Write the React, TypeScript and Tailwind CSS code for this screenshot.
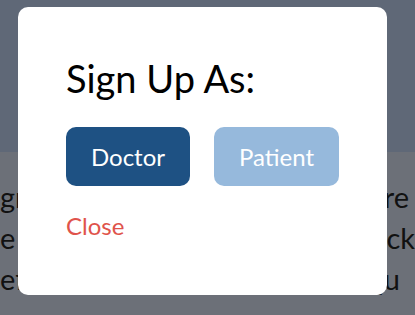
import React from "react";

const SignUpModal = () => {
    return (
        <div className="absolute left-[18px] top-[7px] w-[369px] h-[288px] bg-white rounded-[10px] px-[48px] pt-[48px]">
            <h2 className="text-[38px] leading-[46px] text-black">Sign Up As:</h2>
            <div className="flex flex-row gap-[24px] mt-[26px]">
                <button className="w-[124px] h-[59px] rounded-[10px] bg-[#1e5183] text-white text-[24px]">
                    Doctor
                </button>
                <button className="w-[125px] h-[59px] rounded-[10px] bg-[#96b9dc] text-white text-[24px]">
                    Patient
                </button>
            </div>
            <button className="mt-[24px] text-[24px] leading-[32px] text-[#e0534b]">Close</button>
        </div>
    );
};

const App = () => {
    return (
        <div className="relative w-[415px] h-[315px] overflow-hidden font-['Lato',sans-serif]">
            <div className="h-[152px] bg-[#5f6877]"></div>
            <div className="h-[163px] bg-[#6c7078] pt-[24px] text-[29px] leading-[41px] text-[#111] whitespace-nowrap">
                <div className="flex flex-row justify-between">
                    <span>gr</span>
                    <span className="mr-[6px]">re</span>
                </div>
                <div className="flex flex-row justify-between">
                    <span>e</span>
                    <span>ack</span>
                </div>
                <div className="flex flex-row">
                    <span>eff</span>
                    <span className="ml-[100px]">g</span>
                    <span className="ml-[192px]">g-qu</span>
                </div>
            </div>
            <SignUpModal />
        </div>
    );
};

export default App;
